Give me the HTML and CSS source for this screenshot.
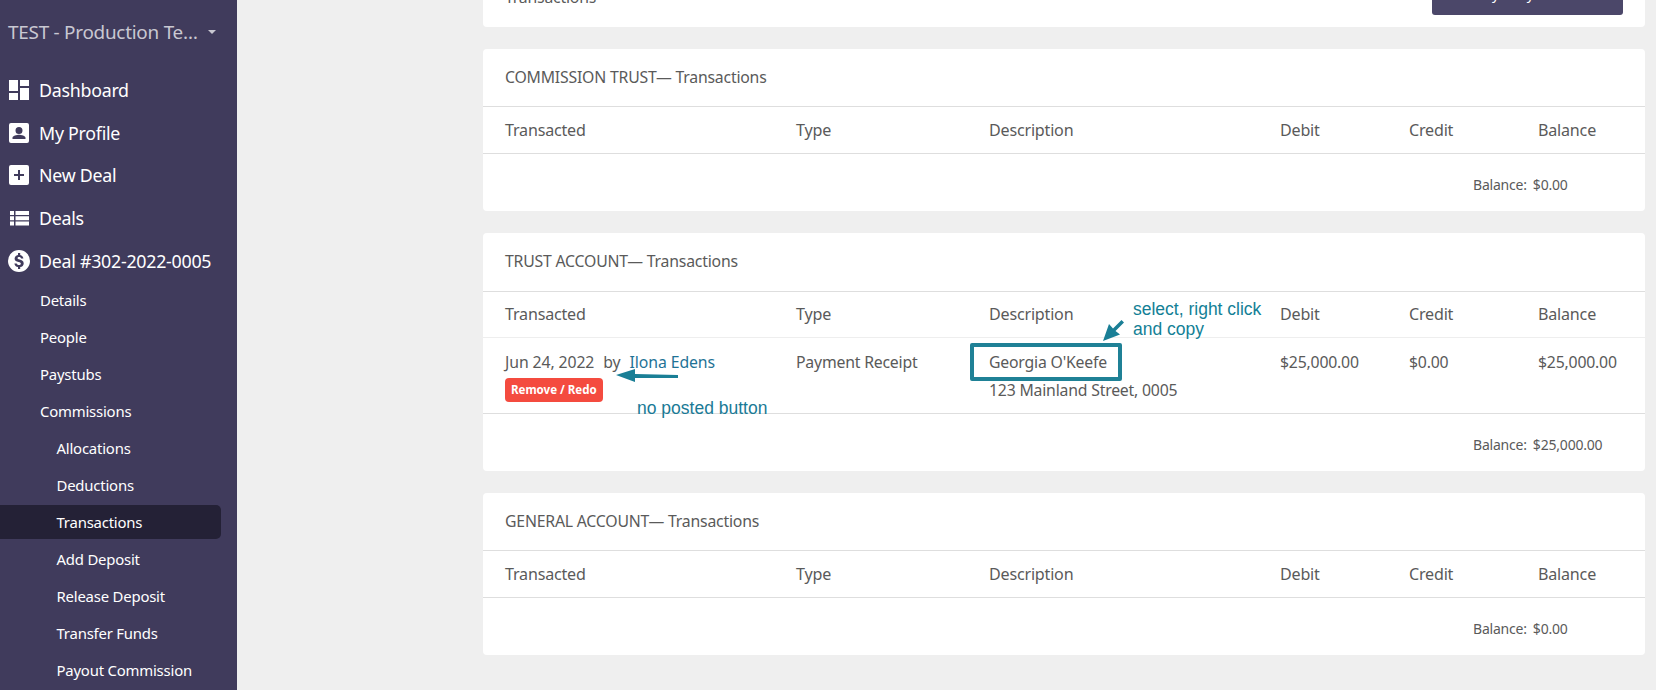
FILE: index.html
```html
<!DOCTYPE html>
<html lang="en">
<head>
<meta charset="utf-8">
<title>Transactions</title>
<link rel="stylesheet" href="styles.css">
</head>
<body>
<div class="app">
  <aside class="sidebar">
    <div class="org"><span class="org-name">TEST - Production Te…</span><span class="caret"></span></div>
    <nav class="nav">
      <a class="nav-item"><svg class="ico" viewBox="0 0 20 20"><path d="M0 0h9v11H0zM11 0h9v6h-9zM0 13h9v7H0zM11 8h9v12h-9z"/></svg>Dashboard</a>
      <a class="nav-item"><svg class="ico" viewBox="0 0 20 20"><path fill-rule="evenodd" d="M2 0h16a2 2 0 0 1 2 2v16a2 2 0 0 1-2 2H2a2 2 0 0 1-2-2V2a2 2 0 0 1 2-2zm8 4a3.5 3.5 0 1 0 0 7 3.5 3.5 0 0 0 0-7zM3.5 16h13v-1.200c0-2-4.300-3-6.500-3s-6.500 1-6.500 3z"/></svg>My Profile</a>
      <a class="nav-item"><svg class="ico" viewBox="0 0 20 20"><path fill-rule="evenodd" d="M2 0h16a2 2 0 0 1 2 2v16a2 2 0 0 1-2 2H2a2 2 0 0 1-2-2V2a2 2 0 0 1 2-2zm7 5v4H5v2h4v4h2v-4h4V9h-4V5z"/></svg>New Deal</a>
      <a class="nav-item"><svg class="ico" viewBox="0 0 20 20"><path d="M1 3h4v4H1zM6.500 3H20v4H6.500zM1 8.200h4v4H1zM6.500 8.200H20v4H6.500zM1 13.400h4v4H1zM6.500 13.400H20v4H6.500z"/></svg>Deals</a>
      <a class="nav-item"><svg class="ico ico-lg" viewBox="0 0 22 22"><path fill-rule="evenodd" d="M11 0a11 11 0 1 1 0 22 11 11 0 0 1 0-22zm-1 3v1.900c-2 .4-3.400 1.800-3.400 3.700 0 2.200 1.800 3 3.900 3.500 1.800.4 2.300.9 2.300 1.600 0 .8-.8 1.300-1.900 1.300-1.200 0-2-.6-2.200-1.500H6.400c.2 2 1.600 3.200 3.600 3.600V19h2.200v-1.900c2.100-.4 3.500-1.700 3.500-3.700 0-2.400-2-3.300-4-3.800-1.700-.4-2.200-.8-2.200-1.500s.7-1.100 1.700-1.100c1.100 0 1.700.6 1.900 1.500h2.300c-.2-1.900-1.400-3.100-3.200-3.500V3z"/></svg>Deal #302-2022-0005</a>
    </nav>
    <ul class="sub">
      <li class="sub-item">Details</li>
      <li class="sub-item">People</li>
      <li class="sub-item">Paystubs</li>
      <li class="sub-item">Commissions</li>
      <li class="sub-item deep">Allocations</li>
      <li class="sub-item deep">Deductions</li>
      <li class="sub-item deep active">Transactions</li>
      <li class="sub-item deep">Add Deposit</li>
      <li class="sub-item deep">Release Deposit</li>
      <li class="sub-item deep">Transfer Funds</li>
      <li class="sub-item deep">Payout Commission</li>
    </ul>
  </aside>
  <main class="main">
    <section class="card card-clipped">
      <div class="clipped-row">
        <span class="card-title">Transactions</span>
        <span class="pay-btn"><span class="pay-k">R</span>Pay / Pay Transaction</span>
      </div>
    </section>

    <section class="card">
      <div class="card-head">COMMISSION TRUST— Transactions</div>
      <div class="row thead"><span>Transacted</span><span>Type</span><span>Description</span><span>Debit</span><span>Credit</span><span>Balance</span></div>
      <div class="card-foot"><span class="foot-label">Balance:</span><span class="foot-val">$0.00</span></div>
    </section>

    <section class="card card-trust">
      <div class="card-head">TRUST ACCOUNT— Transactions</div>
      <div class="row thead thead-light"><span>Transacted</span><span>Type</span><span>Description</span><span>Debit</span><span>Credit</span><span>Balance</span></div>
      <div class="row tbody">
        <div class="cell-stack"><span class="txn-line"><span>Jun 24, 2022</span><span class="by">by</span><span class="user-link">Ilona Edens</span></span><span class="badge">Remove / Redo</span></div>
        <span>Payment Receipt</span>
        <div class="cell-stack"><span>Georgia O'Keefe</span><span class="addr">123 Mainland Street, 0005</span></div>
        <span>$25,000.00</span><span>$0.00</span><span>$25,000.00</span>
      </div>
      <div class="card-foot"><span class="foot-label">Balance:</span><span class="foot-val">$25,000.00</span></div>

      <span class="note posted-note">no posted button</span>
      <span class="note select-note">select, right click<br>and copy</span>
      <span class="note-box"></span>
      <svg class="arrow arrow-left" viewBox="0 0 62 14"><path d="M0 6 L19 0 L19 5 L62 6 L62 9 L19 9 L19 13 Z"/></svg>
      <svg class="arrow arrow-diag" viewBox="0 0 21 21"><path d="M0 21 L6 4 L10 8.500 L18.500 0 L21 2.500 L12.500 11 L17 14.500 Z"/></svg>
    </section>

    <section class="card">
      <div class="card-head">GENERAL ACCOUNT— Transactions</div>
      <div class="row thead"><span>Transacted</span><span>Type</span><span>Description</span><span>Debit</span><span>Credit</span><span>Balance</span></div>
      <div class="card-foot"><span class="foot-label">Balance:</span><span class="foot-val">$0.00</span></div>
    </section>
  </main>
</div>
</body>
</html>
```
FILE: styles.css
```css
* { box-sizing: border-box; }
html, body { margin: 0; padding: 0; height: 100%; overflow: hidden; }
body { font-family: "Noto Sans", "Open Sans", sans-serif; background: #efefef; color: #5a5a5a; }
.app { display: flex; height: 690px; overflow: hidden; }

.sidebar { width: 237px; flex: none; background: #403b5c; color: #fff; padding-right: 16px; }
.org { display: flex; align-items: center; height: 32px; margin-top: 16px; padding-left: 8px; color: #c9c8d2; font-size: 18.900px; }
.org-name { width: 200px; flex: none; white-space: nowrap; letter-spacing: -.25px; }
.caret { border-left: 4px solid transparent; border-right: 4px solid transparent; border-top: 4px solid #c9c8d2; }

.nav { margin-top: 20.500px; }
.nav-item { display: flex; align-items: center; height: 42.700px; padding-left: 9px; font-size: 17.800px; letter-spacing: -.25px; color: #fff; }
.ico { width: 20px; height: 20px; fill: #fff; margin-right: 10px; flex: none; }
.ico-lg { width: 22px; height: 22px; margin-left: -1px; margin-right: 9px; }

.sub { list-style: none; margin: 0; padding: 0; }
.sub-item { display: flex; align-items: center; height: 37px; padding-left: 40px; font-size: 14.900px; letter-spacing: -.2px; color: #fff; }
.deep { padding-left: 56.500px; }
.active { height: 34px; margin: 1.500px 0; background: #242136; border-radius: 0 5px 5px 0; }

.main { flex: 1; min-width: 0; padding: 0 11px 0 246px; display: flex; flex-direction: column; gap: 22px; }
.card { position: relative; background: #fff; border-radius: 4px; flex: none; font-size: 15.800px; letter-spacing: -.2px; }
.card-clipped { height: 27px; overflow: hidden; border-radius: 0 0 4px 4px; display: flex; flex-direction: column; justify-content: flex-end; }
.clipped-row { display: flex; justify-content: space-between; align-items: flex-end; padding: 0 22px 12px 22px; height: 60px; flex: none; }
.card-title { margin-bottom: 7px; }
.pay-btn { width: 191px; height: 36px; background: #4b4769; color: #fff; border-radius: 3px; display: flex; align-items: center; padding: 0 0 7px 13px; font-size: 14px; white-space: nowrap; overflow: hidden; }
.pay-k { font-size: 17px; font-weight: 700; margin-right: 20px; }

.card-head { height: 58px; display: flex; align-items: center; padding: 0 0 1px 22px; border-bottom: 1px solid #dedede; font-size: 15.800px; }
.row { display: grid; grid-template-columns: 291px 193px 291px 129px 129px 1fr; padding-left: 22px; }
.thead { height: 47px; align-items: center; border-bottom: 1px solid #dedede; font-size: 16.100px; }
.thead-light { border-bottom-color: #eeeeee; }
.card-trust .card-head { height: 59px; padding-bottom: 3px; }
.card-trust .thead { height: 46px; padding-bottom: 2px; }
.tbody { height: 76px; padding-top: 13px; border-bottom: 1px solid #dedede; line-height: 22px; }
.cell-stack { display: flex; flex-direction: column; align-items: flex-start; }
.txn-line { display: flex; gap: 9px; white-space: nowrap; letter-spacing: -.1px; }
.user-link { color: #1f7396; }
.badge { margin-top: 5px; height: 24px; padding: 0 6px; display: flex; align-items: center; background: #f44b3f; color: #fff; border-radius: 4px; font-size: 11.500px; font-weight: 700; letter-spacing: 0; }
.addr { margin-top: 6px; }
.card-foot { height: 57px; display: flex; align-items: center; padding: 3px 0 0 990px; font-size: 14px; }
.foot-label { margin-right: 6px; }

.note { position: absolute; font-family: "Liberation Sans", Arial, sans-serif; color: #137f96; font-size: 17.500px; letter-spacing: 0; line-height: 20px; white-space: nowrap; }
.posted-note { left: 154px; top: 165px; color: #1a7a96; }
.select-note { left: 650px; top: 66px; }
.note-box { position: absolute; left: 487px; top: 110px; width: 152px; height: 38px; border: 4px solid #1f8196; border-radius: 2px; }
.arrow { position: absolute; fill: #1a7f96; }
.arrow-left { left: 133px; top: 136px; width: 62px; height: 14px; }
.arrow-diag { left: 620px; top: 87px; width: 21px; height: 21px; }
```
